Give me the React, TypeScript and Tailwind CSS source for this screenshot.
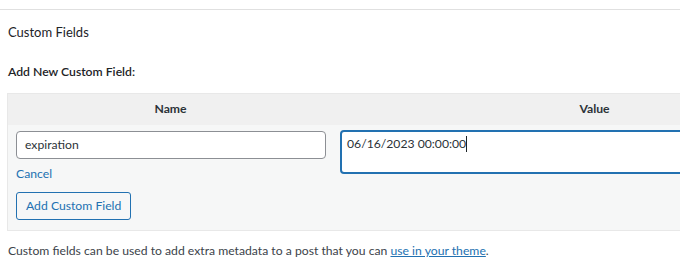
import React from 'react';

export default function App() {
  return (
    <div className="w-[680px] h-[265px] overflow-hidden bg-white text-[12.2px] text-[#1d2327]" style={{ fontFamily: 'Lato, sans-serif' }}>
      <div className="mt-[9px] border-t border-[#e0e0e0] w-[900px]" />
      <div className="pl-2 pt-[12px] text-[13px] leading-5">Custom Fields</div>
      <div className="pl-2 pt-[20px] leading-5 font-semibold">Add New Custom Field:</div>
      <div className="ml-[7px] mt-[11px] w-[850px] border border-[#e8e8e8]">
        <div className="flex h-[31px] bg-[#f0f0f0] items-center font-bold text-[#2c3338]">
          <div className="w-[325px] text-center">Name</div>
          <div className="flex-1 text-center">Value</div>
        </div>
        <div className="flex bg-[#f6f7f7] h-[105px] pt-[6px]">
          <div className="w-[325px] pl-2 pr-[7px]">
            <div className="h-[28px] border border-[#8c8f94] rounded-[4px] bg-white px-2 flex items-center text-[#2c3338]">expiration</div>
            <a className="block mt-[7px] leading-4 text-[#2271b1]">Cancel</a>
            <button className="mt-[10px] h-[28px] px-[9px] border border-[#2271b1] rounded-[3px] text-[#2271b1] bg-[#f6f7f7] leading-none">Add Custom Field</button>
          </div>
          <div className="flex-1 pl-[7px]">
            <div className="h-[44px] -mt-px border-2 border-[#2271b1] rounded-[4px] bg-white px-[5px] pt-[3px] text-[#2c3338] flex items-start">
              <span>06/16/2023 00:00:00</span>
              <span className="inline-block w-px h-[16px] bg-[#1d2327] mt-[1px]" />
            </div>
          </div>
        </div>
      </div>
      <p className="pl-2 pt-[10px] text-[#3c434a] leading-5">
        Custom fields can be used to add extra metadata to a post that you can <a className="text-[#2271b1] underline">use in your theme</a>.
      </p>
    </div>
  );
}
